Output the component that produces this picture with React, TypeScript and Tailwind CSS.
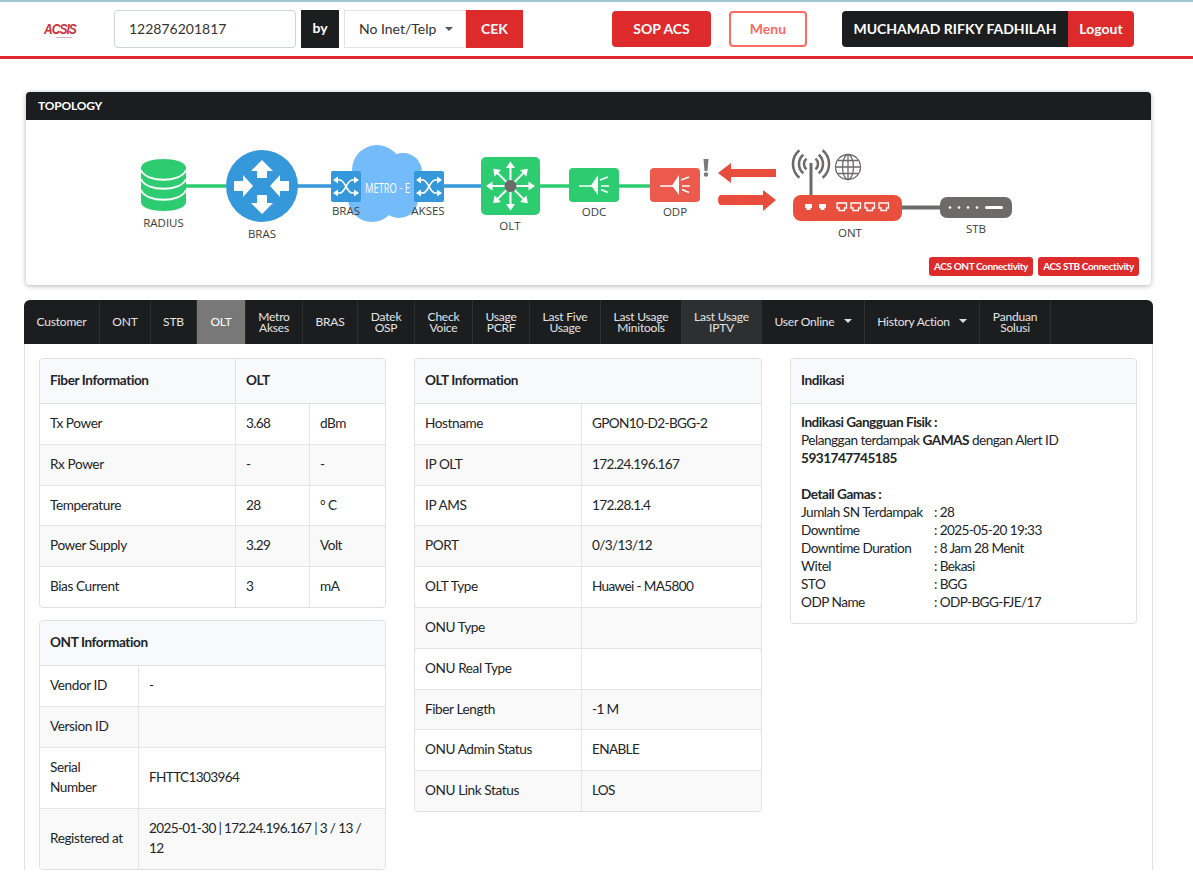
import React from "react";

const ports = [837, 851, 865, 879];

const Splitter = ({ x }: { x: number }) => (
  <g transform={`translate(${x} 0)`} stroke="#fff" strokeWidth="1.5" fill="none">
    <path d="M10 186H23" />
    <path d="M22 185.500L29 175V195Z" fill="#fff" stroke="none" />
    <path d="M31 180L39 177M32 186H40M32 189.500L39 192.500" />
  </g>
);

const SwitchIcon = ({ x }: { x: number }) => (
  <g transform={`translate(${x} 171)`}>
    <rect width="30" height="31" rx="2" fill="#3498db" />
    <path d="M5 9H9C14 9 16 22 21 22H25M5 22H9C14 22 16 9 21 9H25" stroke="#fff" strokeWidth="1.600" fill="none" />
    <path d="M23 5.500L28 9L23 12.500ZM23 18.500L28 22L23 25.500ZM7 5.500L2 9L7 12.500ZM7 18.500L2 22L7 25.500Z" fill="#fff" />
  </g>
);

const Topology = () => (
  <svg viewBox="26 120 1125 165" className="block h-[165px] w-[1125px]">
    {/* links */}
    <path d="M186 186H226M540 186H570M619 186H650" stroke="#2ecc71" strokeWidth="3.500" />
    <path d="M297 186H332M444 186H481" stroke="#3498db" strokeWidth="3.500" />
    <path d="M902 207.500H940" stroke="#6d6a6a" strokeWidth="4" />

    {/* radius */}
    <path d="M141 168C141 156 186 156 186 168V202C186 214 141 214 141 202Z" fill="#2ecc71" />
    <path d="M141 170C146 183 181 183 186 170M141 179C146 192 181 192 186 179M141 190C146 203 181 203 186 190" stroke="#fff" strokeWidth="1.800" fill="none" />

    {/* bras */}
    <circle cx="262" cy="186" r="36" fill="#3498db" />
    <g fill="#fff">
      <polygon points="262,160 273,171 267,171 267,178 257,178 257,171 251,171" />
      <polygon points="262,214 273,203 267,203 267,195 257,195 257,203 251,203" />
      <polygon points="253,186 243,175 243,181 234,181 234,191 243,191 243,197" />
      <polygon points="270,186 280,175 280,181 289,181 289,191 280,191 280,197" />
    </g>

    {/* metro */}
    <g fill="#74bbfb">
      <circle cx="377" cy="170" r="25" />
      <circle cx="403" cy="172" r="19" />
      <circle cx="372" cy="198" r="24" />
      <circle cx="399" cy="199" r="19" />
      <rect x="360" y="165" width="55" height="40" />
    </g>
    <SwitchIcon x={331} />
    <SwitchIcon x={414} />
    <text x="365" y="193" textLength="45" lengthAdjust="spacingAndGlyphs" fill="#fff" className="text-[15px] font-['Open_Sans',sans-serif]">METRO - E</text>

    {/* olt */}
    <rect x="481" y="157" width="59" height="58" rx="5" fill="#2ecc71" />
    {[0, 45, 90, 135, 180, 225, 270, 315].map((a) => (
      <g key={a} transform={`rotate(${a} 510.500 186)`}>
        <path d="M510.500 186V166" stroke="#fff" strokeWidth="2" />
        <path d="M510.500 161.500L515 168H506Z" fill="#fff" />
      </g>
    ))}
    <circle cx="510.500" cy="186" r="6" fill="#6d6a6a" />

    {/* odc / odp */}
    <rect x="569" y="168" width="50" height="34" rx="4" fill="#2ecc71" />
    <Splitter x={569} />
    <rect x="650" y="168" width="50" height="34" rx="4" fill="#eb5a4c" />
    <Splitter x={650} />
    <path d="M703.500 159H708.500L707.500 171H704.500Z" fill="#7a7a7a" />
    <circle cx="706" cy="174.500" r="2.200" fill="#7a7a7a" />

    {/* arrows */}
    <path d="M718 173L731 163V169H776V177H731V183Z" fill="#e74c3c" />
    <path d="M776 200L763 190V195H721C717 195 717 205 721 205H763V211Z" fill="#e74c3c" />

    {/* wifi, globe */}
    <g stroke="#6d6a6a" fill="none" strokeWidth="2.500">
      <path d="M806.500 158.600A7 7 0 0 0 806.500 169.400M803.300 154.800A12 12 0 0 0 803.300 173.200M799.400 150.200A18 18 0 0 0 799.400 177.800" />
      <path d="M815.500 158.600A7 7 0 0 1 815.500 169.400M818.700 154.800A12 12 0 0 1 818.700 173.200M822.600 150.200A18 18 0 0 1 822.600 177.800" />
      <path d="M811 163V196" strokeWidth="3" />
    </g>
    <g stroke="#6d6a6a" fill="none" strokeWidth="1.300">
      <circle cx="848" cy="167" r="12.500" />
      <ellipse cx="848" cy="167" rx="5.500" ry="12.500" />
      <path d="M848 154.500V179.500M835.500 167H860.500M837.500 160.500H858.500M837.500 173.500H858.500" />
    </g>

    {/* ont */}
    <rect x="793" y="195" width="109" height="26" rx="8" fill="#e94f3d" />
    {[805, 819].map((x) => (
      <path key={x} transform={`translate(${x} 204)`} d="M0 0H7V4H5.500V6H1.500V4H0Z" fill="#fff" />
    ))}
    {ports.map((x) => (
      <path key={x} transform={`translate(${x} 203)`} d="M0 0H9.500V5H7.500V7.500H2V5H0Z" fill="none" stroke="#fff" strokeWidth="1.300" />
    ))}

    {/* stb */}
    <rect x="940" y="197" width="72" height="21" rx="7" fill="#6d6a6a" />
    {[950, 959, 968, 977].map((x) => (
      <circle key={x} cx={x} cy="207.500" r="1.300" fill="#fff" />
    ))}
    <rect x="985" y="206" width="18" height="3" rx="1.500" fill="#fff" />

    {/* labels */}
    <g fill="#3c3c3c" textAnchor="middle" className="text-[11.5px] font-['Open_Sans',sans-serif]">
      <text x="163.500" y="227">RADIUS</text>
      <text x="262" y="238">BRAS</text>
      <text x="346" y="215">BRAS</text>
      <text x="428" y="215">AKSES</text>
      <text x="510" y="230">OLT</text>
      <text x="594" y="216">ODC</text>
      <text x="675" y="216">ODP</text>
      <text x="850" y="237">ONT</text>
      <text x="976" y="233">STB</text>
    </g>
  </svg>
);

const tabs = [
  { label: ["Customer"], w: "w-[76px]" },
  { label: ["ONT"], w: "w-[51px]" },
  { label: ["STB"], w: "w-[46px]" },
  { label: ["OLT"], w: "w-[49px]", bg: "bg-[#787878] text-white" },
  { label: ["Metro", "Akses"], w: "w-[57px]" },
  { label: ["BRAS"], w: "w-[55px]" },
  { label: ["Datek", "OSP"], w: "w-[57px]" },
  { label: ["Check", "Voice"], w: "w-[58px]" },
  { label: ["Usage", "PCRF"], w: "w-[57px]" },
  { label: ["Last Five", "Usage"], w: "w-[71px]" },
  { label: ["Last Usage", "Minitools"], w: "w-[81px]" },
  { label: ["Last Usage", "IPTV"], w: "w-[80px]", bg: "bg-[#2e2f30]" },
  { label: ["User Online"], w: "w-[103px]", caret: true },
  { label: ["History Action"], w: "w-[115px]", caret: true },
  { label: ["Panduan", "Solusi"], w: "w-[71px]" },
];

const Caret = ({ className }: { className: string }) => (
  <span className={`inline-block border-x-[4px] border-t-[4px] border-x-transparent ${className}`} />
);

const Card = ({ children, className = "" }: { children: React.ReactNode; className?: string }) => (
  <div className={`overflow-hidden rounded-[4px] border border-[#dfe0e1] bg-white ${className}`}>{children}</div>
);

const Head = ({ cells }: { cells: [string, string] | [string] }) => (
  <div className="flex h-[45px] border-b border-[#dfe0e1] bg-[#f8f9fa] pb-[1px] font-bold tracking-[-0.4px]">
    <div className={`flex items-center px-[10px] ${cells[1] ? "w-[196px] border-r border-[#dfe0e1]" : ""}`}>{cells[0]}</div>
    {cells[1] && <div className="flex items-center px-[10px]">{cells[1]}</div>}
  </div>
);

const fiberRows = [
  ["Tx Power", "3.68", "dBm"],
  ["Rx Power", "-", "-"],
  ["Temperature", "28", "° C"],
  ["Power Supply", "3.29", "Volt"],
  ["Bias Current", "3", "mA"],
];

const ontRows = [
  ["Vendor ID", "-"],
  ["Version ID", ""],
  ["Serial Number", "FHTTC1303964"],
  ["Registered at", "2025-01-30 | 172.24.196.167 | 3 / 13 / 12"],
];

const oltRows = [
  ["Hostname", "GPON10-D2-BGG-2"],
  ["IP OLT", "172.24.196.167"],
  ["IP AMS", "172.28.1.4"],
  ["PORT", "0/3/13/12"],
  ["OLT Type", "Huawei - MA5800"],
  ["ONU Type", ""],
  ["ONU Real Type", ""],
  ["Fiber Length", "-1 M"],
  ["ONU Admin Status", "ENABLE"],
  ["ONU Link Status", "LOS"],
];

const gamas = [
  ["Jumlah SN Terdampak", ": 28"],
  ["Downtime", ": 2025-05-20 19:33"],
  ["Downtime Duration", ": 8 Jam 28 Menit"],
  ["Witel", ": Bekasi"],
  ["STO", ": BGG"],
  ["ODP Name", ": ODP-BGG-FJE/17"],
];

const rowClass = (i: number, n: number) =>
  `flex ${i < n - 1 ? "border-b border-[#e4e5e6]" : ""} ${i % 2 === 1 ? "bg-[#f9f9f9]" : ""}`;

const Cell = ({ className, children }: { className: string; children: React.ReactNode }) => (
  <div className={`flex items-center px-[10px] pb-[10.4px] pt-[9px] ${className}`}>
    <span>{children}</span>
  </div>
);

export default function App() {
  return (
    <div className="h-[884px] overflow-hidden bg-white font-['Lato',sans-serif] text-[13.6px] leading-[20.4px] text-[#212529]">
      <div className="h-[2px] bg-[#9cc5cf]" />

      {/* Header */}
      <header className="flex h-[57px] items-start border-b-[3px] border-[#e1282c] pt-[8px]">
        <div className="ml-[44px] mt-[11px] w-[33px] origin-left scale-x-[0.8] whitespace-nowrap text-[15px] font-bold italic leading-[15px] tracking-[-1.2px] text-[#c9313b] [font-family:'Liberation_Sans',sans-serif]">
          ACSIS
          <div className="ml-[15px] mt-[1px] h-px w-[20px] bg-[#c9b8b8]" />
        </div>
        <div className="ml-[37px] flex h-[38px] w-[182px] items-center rounded-[4px] border border-[#ced4da] px-[14px] text-[14px] text-[#333]">
          122876201817
        </div>
        <div className="ml-[5px] flex h-[38px] w-[38px] items-center justify-center bg-[#1c1d1f] pb-[2px] text-[14px] font-bold text-white">
          by
        </div>
        <div className="ml-[5px] flex h-[38px] w-[122px] items-center gap-[9px] border border-[#e3e3e3] pl-[14px] text-[14px] text-[#333]">
          No Inet/Telp
          <Caret className="border-t-[#555]" />
        </div>
        <div className="flex h-[38px] w-[57px] items-center justify-center bg-[#dd2a2a] pt-[1px] text-[14px] font-bold text-white">
          CEK
        </div>
        <div className="ml-[89px] mt-[1px] flex h-[36px] w-[99px] items-center justify-center rounded-[4px] bg-[#dd2a2a] text-[14px] font-bold text-white">
          SOP ACS
        </div>
        <div className="ml-[18px] mt-[1px] flex h-[36px] w-[78px] items-center justify-center rounded-[4px] border-2 border-[#fb6a63] text-[14px] font-bold text-[#fb6a63]">
          Menu
        </div>
        <div className="ml-[35px] mt-[1px] flex h-[36px] overflow-hidden rounded-[4px] text-[14px] font-bold text-white">
          <div className="flex w-[226px] items-center justify-center bg-[#1c1d1f]">MUCHAMAD RIFKY FADHILAH</div>
          <div className="flex w-[66px] items-center justify-center bg-[#dd2a2a]">Logout</div>
        </div>
      </header>

      {/* Topology */}
      <section className="relative ml-[26px] mt-[33px] h-[193px] w-[1125px] overflow-hidden rounded-[4px] bg-white shadow-[0_1px_5px_rgba(0,0,0,0.3)]">
        <div className="flex h-[28px] items-center bg-[#1c1d1f] pl-[12px] pt-[1px] text-[12px] font-bold tracking-[-0.2px] text-white">TOPOLOGY</div>
        <Topology />
        <div className="absolute right-[12px] top-[165px] flex gap-[5px] text-[10px] font-bold leading-[19px] tracking-[-0.4px] text-white">
          <span className="w-[104px] rounded-[3px] bg-[#dd2a2a] text-center">ACS ONT Connectivity</span>
          <span className="w-[101px] rounded-[3px] bg-[#dd2a2a] text-center">ACS STB Connectivity</span>
        </div>
      </section>

      {/* Tabs */}
      <section className="ml-[24px] mt-[15px] w-[1129px] rounded-t-[6px] border-x border-[#dfe0e1]">
        <nav className="-mx-px flex h-[44px] rounded-t-[6px] bg-[#1c1d1f] text-[12px] leading-[11px] tracking-[-0.2px] text-[#e4e4e4]">
          {tabs.map((t) => (
            <div
              key={t.label.join(" ")}
              className={`flex items-center justify-center gap-[9px] border-r border-[#2e2f30] text-center ${t.w} ${t.bg ?? ""} ${t.label.length === 1 ? "pb-[2px]" : ""}`}
            >
              <span>
                {t.label.map((l) => (
                  <span key={l} className="block">{l}</span>
                ))}
              </span>
              {t.caret && <Caret className="border-t-[#ddd]" />}
            </div>
          ))}
        </nav>

        <div className="grid grid-cols-[347px_348px_347px] gap-x-[28px] pl-[14px] pt-[14px]">
          <div className="flex flex-col gap-[12px]">
            <Card>
              <Head cells={["Fiber Information", "OLT"]} />
              {fiberRows.map((r, i) => (
                <div key={r[0]} className={rowClass(i, fiberRows.length)}>
                  <Cell className="w-[196px] border-r border-[#e4e5e6] tracking-[-0.4px]">{r[0]}</Cell>
                  <Cell className="w-[74px] border-r border-[#e4e5e6] tracking-[-0.65px]">{r[1]}</Cell>
                  <Cell className="flex-1 tracking-[-0.5px]">{r[2]}</Cell>
                </div>
              ))}
            </Card>
            <Card>
              <Head cells={["ONT Information"]} />
              {ontRows.map((r, i) => (
                <div key={r[0]} className={rowClass(i, ontRows.length)}>
                  <Cell className="w-[99px] shrink-0 border-r border-[#e4e5e6] tracking-[-0.4px]">{r[0]}</Cell>
                  <Cell className="flex-1 tracking-[-0.65px]">{r[1] || "\u00a0"}</Cell>
                </div>
              ))}
            </Card>
          </div>

          <Card className="self-start">
            <Head cells={["OLT Information"]} />
            {oltRows.map((r, i) => (
              <div key={r[0]} className={rowClass(i, oltRows.length)}>
                <Cell className="w-[167px] border-r border-[#e4e5e6] tracking-[-0.4px]">{r[0]}</Cell>
                <Cell className="flex-1 tracking-[-0.65px]">{r[1] || "\u00a0"}</Cell>
              </div>
            ))}
          </Card>

          <Card className="self-start">
            <Head cells={["Indikasi"]} />
            <div className="px-[10px] pb-[12px] pt-[9px] leading-[18px] tracking-[-0.5px]">
              <div className="font-bold">Indikasi Gangguan Fisik :</div>
              <div>
                Pelanggan terdampak <b>GAMAS</b> dengan Alert ID <b>5931747745185</b>
              </div>
              <div className="mt-[18px] font-bold">Detail Gamas :</div>
              {gamas.map(([k, v]) => (
                <div key={k} className="flex">
                  <span className="w-[133px]">{k}</span>
                  <span className="tracking-[-0.6px]">{v}</span>
                </div>
              ))}
            </div>
          </Card>
        </div>
      </section>
    </div>
  );
}
